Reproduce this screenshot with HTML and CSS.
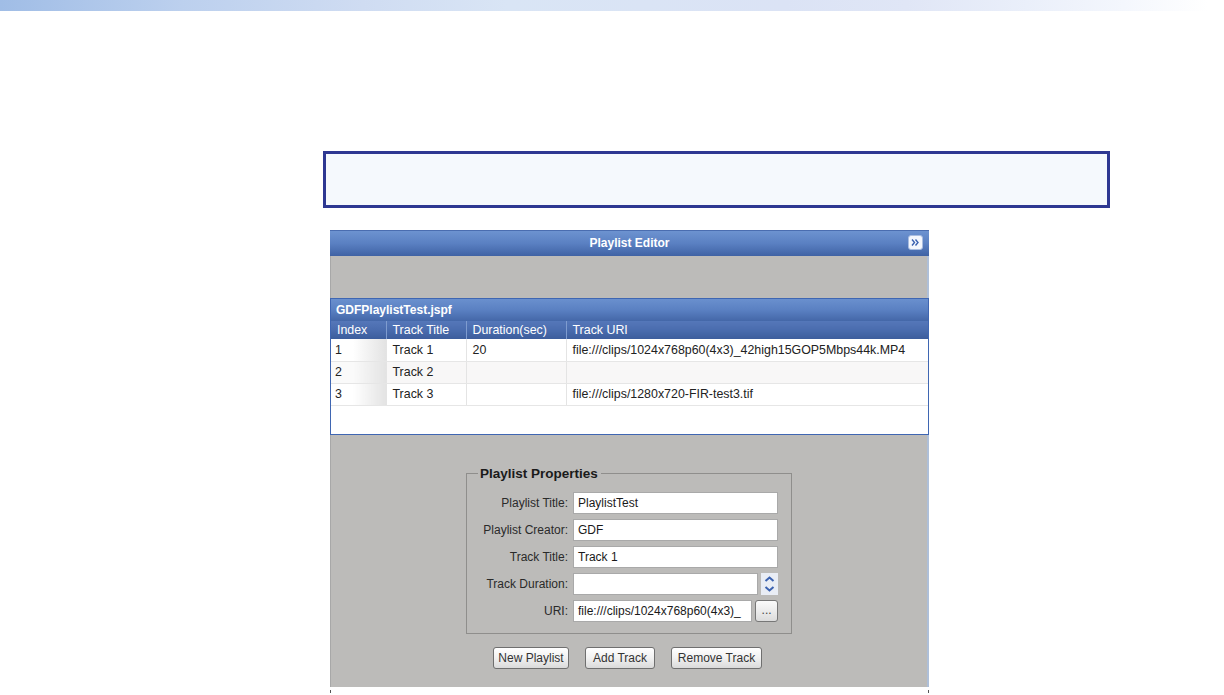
FILE: index.html
```html
<!DOCTYPE html>
<html>
<head>
<meta charset="utf-8">
<link rel="stylesheet" href="styles.css">
</head>
<body>
<div class="topbar"></div>
<div class="note"></div>
<div class="editor">
  <div class="ed-head">
    <span class="ed-title">Playlist Editor</span>
    <span class="collapse"><svg width="15" height="15" viewBox="0 0 15 15"><rect x="0.5" y="0.5" width="14" height="14" rx="2.5" fill="#f4f7fd" stroke="#a9bde0"/><path d="M4 4.5 L6.5 7.5 L4 10.5 M7.5 4.5 L10 7.5 L7.5 10.5" fill="none" stroke="#3b62b0" stroke-width="1.4"/></svg></span>
  </div>
  <div class="strip"></div>
  <div class="grid-panel">
    <div class="gp-title">GDFPlaylistTest.jspf</div>
    <table class="tracks">
      <colgroup><col class="c1"><col class="c2"><col class="c3"><col class="c4"></colgroup>
      <thead>
        <tr><th>Index</th><th>Track Title</th><th>Duration(sec)</th><th>Track URI</th></tr>
      </thead>
      <tbody>
        <tr><td class="idx">1</td><td>Track 1</td><td>20</td><td>file:///clips/1024x768p60(4x3)_42high15GOP5Mbps44k.MP4</td></tr>
        <tr class="alt"><td class="idx">2</td><td>Track 2</td><td></td><td></td></tr>
        <tr><td class="idx">3</td><td>Track 3</td><td></td><td>file:///clips/1280x720-FIR-test3.tif</td></tr>
      </tbody>
    </table>
    <div class="gp-empty"></div>
  </div>
  <div class="lower">
    <fieldset class="props">
      <legend>Playlist Properties</legend>
      <div class="form">
        <span class="lbl">Playlist Title:</span>
        <div class="field">PlaylistTest</div>
        <span class="lbl">Playlist Creator:</span>
        <div class="field">GDF</div>
        <span class="lbl">Track Title:</span>
        <div class="field">Track 1</div>
        <span class="lbl">Track Duration:</span>
        <div class="combo">
          <div class="field short"></div>
          <span class="spin"><svg width="17" height="22" viewBox="0 0 17 22"><rect x="0" y="0" width="17" height="22" fill="#e9edf5"/><path d="M4.5 8 L8.5 4.5 L12.5 8" fill="none" stroke="#3b62b0" stroke-width="2"/><path d="M4.5 14 L8.5 17.5 L12.5 14" fill="none" stroke="#3b62b0" stroke-width="2"/></svg></span>
        </div>
        <span class="lbl">URI:</span>
        <div class="combo">
          <div class="field uri">file:///clips/1024x768p60(4x3)_</div>
          <span class="dots">...</span>
        </div>
      </div>
    </fieldset>
    <div class="buttons">
      <span class="btn w1">New Playlist</span>
      <span class="btn w2">Add Track</span>
      <span class="btn w3">Remove Track</span>
    </div>
  </div>
  <div class="ticks"><span class="tick"></span><span class="tick"></span></div>
</div>
</body>
</html>
```
FILE: styles.css
```css
* { box-sizing: border-box; }
html, body { margin: 0; padding: 0; background: #ffffff; }
body { font-family: "Liberation Sans", Arial, sans-serif; font-size: 12px; color: #222; }

.topbar {
  height: 11px;
  width: 1208px;
  background: linear-gradient(to right, #a0bde6 0%, #bcd0ee 15%, #cfdcf2 30%, #d9e5f5 42%, #dbe3f5 65%, #e0e6f6 75%, #eaeffa 85%, #f4f7fd 93%, #ffffff 100%);
}

.note {
  margin: 140px 0 0 323px;
  width: 787px;
  height: 57px;
  border: 3px solid #2e3892;
  background: #f5f9fd;
}

.editor {
  margin: 22px 0 0 330px;
  width: 599px;
}

.ed-head {
  height: 26px;
  border-top: 1px solid #4a6db0;
  background: linear-gradient(to bottom, #6d93d0 0%, #5a80c2 50%, #3f62a4 100%);
  display: flex;
  align-items: center;
  justify-content: center;
  position: relative;
}
.ed-title { color: #fff; font-weight: bold; font-size: 12px; padding-bottom: 1px; }
.collapse { position: absolute; right: 6px; top: 4px; width: 15px; height: 15px; display: block; }
.collapse svg { display: block; }

.strip {
  height: 42px;
  background: #bcbbb9;
  border-left: 1px solid #a8a8a8;
  border-right: 2px solid #aebfd8;
}

.grid-panel {
  border: 1px solid #3f66b2;
  background: #fff;
}
.gp-title {
  height: 22px;
  line-height: 22px;
  padding-left: 5px;
  color: #fff;
  font-weight: bold;
  background: linear-gradient(to bottom, #6a90ce 0%, #5a80c2 50%, #4467a8 100%);
}
.tracks {
  width: 100%;
  border-collapse: collapse;
  table-layout: fixed;
  font-size: 12.4px;
}
.c1 { width: 55px; }
.c2 { width: 80px; }
.c3 { width: 100px; }
.tracks th {
  height: 18px;
  padding: 0 0 0 6px;
  text-align: left;
  font-weight: normal;
  color: #fff;
  background: linear-gradient(to bottom, #5577b9 0%, #4a6cae 50%, #3c5d9c 100%);
  border-left: 1px solid #7f9ccf;
  white-space: nowrap;
}
.tracks th:first-child { border-left: none; }
.tracks td {
  height: 22px;
  padding: 0 0 0 6px;
  border-left: 1px solid #e4e4e4;
  border-bottom: 1px solid #e6e6e6;
  white-space: nowrap;
  overflow: hidden;
  color: #222;
}
.tracks td.idx {
  border-left: none;
  padding-left: 4px;
  background: linear-gradient(to right, #ffffff 0%, #ffffff 40%, #e3e3e3 100%);
}
.tracks tr.alt td { background: #f8f7f7; }
.tracks tr.alt td.idx { background: linear-gradient(to right, #fafafa 0%, #fafafa 40%, #e3e3e3 100%); }
.gp-empty { height: 28px; }

.lower {
  height: 252px;
  background: #bcbbb9;
  border-left: 1px solid #a8a8a8;
  border-right: 2px solid #aebfd8;
  display: flex;
  flex-direction: column;
  align-items: center;
  padding-top: 31px;
}

.props {
  margin: 0;
  width: 326px;
  border: 1px solid #8f8e8c;
  padding: 11px 13px 11px 8px;
}
.props legend {
  font-weight: bold;
  font-size: 13.5px;
  color: #1a1a1a;
  padding: 0 3px 0 2px;
  margin-left: 3px;
}
.form {
  display: grid;
  grid-template-columns: 1fr 205px;
  column-gap: 5px;
  row-gap: 5px;
  align-items: center;
}
.lbl { text-align: right; color: #2a2a2a; }
.field {
  height: 22px;
  line-height: 20px;
  padding-left: 4px;
  background: #fff;
  border: 1px solid #a9a9a9;
  color: #1a1a1a;
  white-space: nowrap;
  overflow: hidden;
}
.combo { display: flex; align-items: center; }
.field.short { width: 185px; }
.spin { width: 17px; height: 22px; margin-left: 3px; display: block; }
.spin svg { display: block; }
.field.uri { width: 180px; }
.dots {
  width: 23px;
  height: 22px;
  margin-left: 3px;
  border: 1px solid #777;
  border-radius: 3px;
  background: linear-gradient(to bottom, #fbfbfb, #dcdcdc);
  text-align: center;
  line-height: 18px;
  color: #444;
}

.buttons {
  margin-top: 13px;
  display: flex;
  gap: 16px;
  padding-right: 3px;
}
.btn {
  height: 22px;
  line-height: 20px;
  border: 1px solid #6f6f6f;
  border-radius: 3px;
  background: linear-gradient(to bottom, #ffffff 0%, #f1f1f1 50%, #dadada 100%);
  text-align: center;
  color: #333;
}
.w1 { width: 76px; }
.w2 { width: 70px; }
.w3 { width: 91px; }

.ticks { display: flex; justify-content: space-between; padding: 3px 0 0 0; }
.tick { width: 1px; height: 3px; background: #555; }
```
